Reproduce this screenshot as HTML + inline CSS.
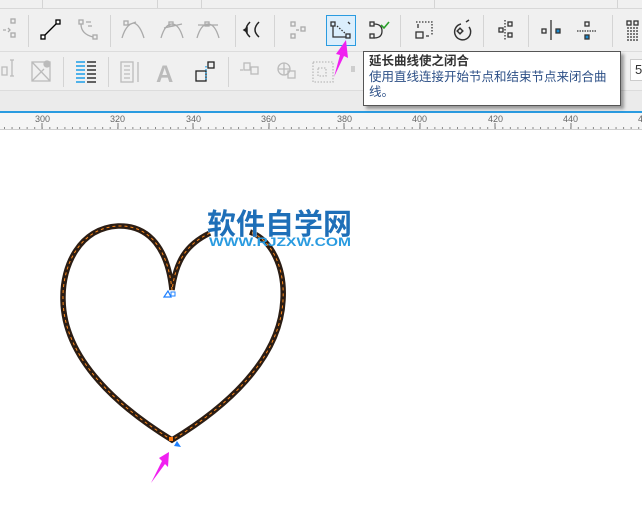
<!DOCTYPE html>
<html><head><meta charset="utf-8"><style>
body{margin:0;width:642px;height:507px;overflow:hidden;background:#fff;font-family:"Liberation Sans","Noto Sans CJK SC",sans-serif;position:relative}
.a{position:absolute}
.sep{position:absolute;width:1px;background:#d4d4d4}
</style></head><body>
<div class="a" style="left:0;top:0;width:642px;height:112px;background:#f0f0f0"></div>
<div class="a" style="left:0;top:8px;width:642px;height:1px;background:#d8d8d8"></div>
<div class="sep" style="left:42px;top:0;height:8px"></div>
<div class="sep" style="left:157px;top:0;height:8px"></div>
<div class="sep" style="left:201px;top:0;height:8px"></div>
<div class="sep" style="left:434px;top:0;height:8px"></div>
<div class="sep" style="left:617px;top:0;height:8px"></div>
<div class="a" style="left:0;top:51px;width:642px;height:1px;background:#dcdcdc"></div>
<div class="a" style="left:0;top:90px;width:642px;height:1px;background:#dcdcdc"></div>
<div class="a" style="left:0;top:91px;width:642px;height:21px;background:#ebebeb"></div>
<div class="a" style="left:0;top:111px;width:642px;height:2px;background:#2a9be0"></div>
<div class="a" style="left:0;top:113px;width:642px;height:17px;background:#f5f5f5"></div>
<div class="a" style="left:0;top:129px;width:642px;height:1px;background:#cfcfcf"></div>
<div class="sep" style="left:28px;top:15px;height:32px"></div>
<div class="sep" style="left:110px;top:15px;height:32px"></div>
<div class="sep" style="left:235px;top:15px;height:32px"></div>
<div class="sep" style="left:274px;top:15px;height:32px"></div>
<div class="sep" style="left:400px;top:15px;height:32px"></div>
<div class="sep" style="left:483px;top:15px;height:32px"></div>
<div class="sep" style="left:528px;top:15px;height:32px"></div>
<div class="sep" style="left:612px;top:15px;height:32px"></div>
<div class="sep" style="left:63px;top:57px;height:30px"></div>
<div class="sep" style="left:108px;top:57px;height:30px"></div>
<div class="sep" style="left:228px;top:57px;height:30px"></div>
<div class="a" style="left:326px;top:15px;width:30px;height:31px;border:1px solid #2a9be0;background:#dbeefc;box-sizing:border-box"></div>
<svg class="a" style="left:0;top:0" width="642" height="130">
<g fill="none" stroke-width="1.3">
<g stroke="#aaa"><rect x="11" y="19" width="4" height="4"/><rect x="11" y="33" width="4" height="4"/><path d="M3 30h3M8 28l2 2-2 2"/></g>
<g stroke="#000"><path d="M43 37L58 22"/><rect x="41" y="35" width="4" height="4" fill="#fff"/><rect x="56" y="20" width="4" height="4" fill="#fff"/></g>
<g stroke="#aaa"><rect x="79" y="20" width="4" height="4"/><path d="M81 24q0 10 12 13M86 22h5M88 26h4"/><rect x="93" y="35" width="4" height="4"/></g>
<g stroke="#aaa"><rect x="124" y="21" width="4" height="4"/><path d="M122 38q4-14 12-15q6 2 10 15M128 25l8-3"/></g>
<g stroke="#aaa"><path d="M161 38q4-14 11-14q7 0 11 14M164 28l18-4"/><rect x="169" y="22" width="4" height="4"/></g>
<g stroke="#aaa"><path d="M197 38q4-14 11-14q7 0 11 14M198 25h20"/><rect x="205" y="22" width="4" height="4"/></g>
<g stroke="#222" stroke-width="1.5"><path d="M250 22q-8 8 0 15M259 22q-8 8 0 15"/><path d="M244 30l3-2v4z" fill="#222"/></g>
<g stroke="#aaa"><rect x="291" y="22" width="4" height="4"/><rect x="291" y="34" width="4" height="4"/><rect x="301" y="27" width="4" height="4"/><path d="M296 30h3"/></g>
<g stroke="#333"><rect x="331" y="22" width="4" height="4"/><path d="M333 26v11h13" /><rect x="346" y="34" width="4" height="4"/><path d="M337 26l9 8" stroke-dasharray="1.5 1.5"/><path d="M348 22l2 2"/></g>
<g stroke="#333"><rect x="370" y="22" width="4" height="4"/><rect x="370" y="34" width="4" height="4"/><path d="M374 24q8 0 8 7q0 7-8 7"/><path d="M381 25l3 3 5-6" stroke="#2aa02a" stroke-width="1.6"/></g>
<g stroke="#333"><path d="M416 22h16v14" stroke-dasharray="1.5 1.5"/><rect x="416" y="32" width="7" height="6"/><path d="M418 24v4M426 36h3"/></g>
<g stroke="#333" stroke-width="1.5"><path d="M461 24a8 8 0 1 0 8 3"/><rect x="458" y="29" width="4" height="4" transform="rotate(45 460 31)"/><path d="M466 22l3-2"/></g>
<g stroke="#333"><rect x="499" y="28" width="4" height="4"/><rect x="508" y="22" width="4" height="4"/><rect x="508" y="33" width="4" height="4"/><path d="M505 20v20" stroke-dasharray="1.5 1.5"/></g>
<g stroke="#333"><rect x="542" y="29" width="4" height="4"/><rect x="556" y="29" width="4" height="4" fill="#1a8ad0"/><path d="M551 20v20"/></g>
<g stroke="#333"><rect x="585" y="22" width="4" height="4"/><rect x="585" y="35" width="4" height="4" fill="#1a8ad0"/><path d="M577 31h20" stroke-dasharray="1.5 1"/></g>
<g stroke="#333"><rect x="627" y="21" width="4" height="4"/><rect x="634" y="21" width="4" height="4"/><path d="M627 28h11M627 31h11M627 34h11M627 37h11M627 40h11" stroke-dasharray="2 1"/></g>
<g stroke="#bbb"><path d="M12 60v16M10 60h4M10 76h4M2 67h5v8h-5z"/></g>
<g stroke="#bbb"><rect x="32" y="62" width="18" height="19"/><path d="M32 62l18 19M32 81l12-12"/><circle cx="47" cy="64" r="3" fill="#bbb"/></g>
<g stroke-width="1.6"><path d="M76 62h9M76 66h9M76 70h9M76 74h9M76 78h9M76 82h9" stroke="#1a9ee8"/><path d="M87 62h9M87 66h9M87 70h9M87 74h9M87 78h9M87 82h9" stroke="#333"/></g>
<g stroke="#bbb"><rect x="121" y="62" width="12" height="20"/><path d="M124 66h6M124 70h6M124 74h6M124 78h6M138 62v20"/></g>
<text x="156" y="82" font-size="24" font-weight="bold" fill="#bbb" font-family="Liberation Sans">A</text>
<g stroke="#222"><rect x="196" y="71" width="10" height="10"/><rect x="208" y="62" width="6" height="6"/></g><path d="M206 66v15" stroke="#1a9ee8" stroke-dasharray="1.5 1.5"/>
<g stroke="#bbb"><rect x="244" y="63" width="6" height="7"/><rect x="251" y="67" width="7" height="7"/><path d="M240 70h3"/></g>
<g stroke="#bbb"><circle cx="284" cy="69" r="6"/><path d="M278 69h12M284 63v12"/><rect x="288" y="71" width="7" height="7"/></g>
<g stroke="#bbb" stroke-dasharray="1.5 1.5"><rect x="313" y="62" width="20" height="20"/><rect x="318" y="68" width="8" height="8"/></g>
<path d="M352 66v6M354 66v6" stroke="#bbb"/>
</g>
<g font-size="9" fill="#666" font-family="Liberation Sans">
<text x="35" y="122">300</text><text x="110" y="122">320</text><text x="186" y="122">340</text><text x="261" y="122">360</text><text x="337" y="122">380</text><text x="412" y="122">400</text><text x="488" y="122">420</text><text x="563" y="122">440</text><text x="638" y="122">4</text>
</g>
<g stroke="#777" stroke-width="1">
<path d="M42 123v6M118 123v6M193 123v6M269 123v6M344 123v6M420 123v6M495 123v6M571 123v6"/>
</g>
<path d="M4 128h638" stroke="#888" stroke-width="2" stroke-dasharray="1 6.55"/>
<path d="M346 40l-10 14 4 1-6 22 10-21 4 2z" fill="#f020f0"/>
</svg>
<div class="a" style="left:630px;top:59px;width:20px;height:22px;border:1px solid #ccc;background:#fff;font-size:13px;color:#333;box-sizing:border-box;padding:2px 0 0 4px">5</div>
<div class="a" style="left:363px;top:51px;width:258px;height:55px;background:#fff;border:1px solid #555;box-shadow:3px 3px 3px rgba(0,0,0,.35);box-sizing:border-box;padding:2px 0 0 5px;font-size:12.5px;line-height:15.5px;color:#333">
<b>延长曲线使之闭合</b><br><span style="color:#2c4f86">使用直线连接开始节点和结束节点来闭合曲线。</span></div>
<svg class="a" style="left:0;top:0" width="642" height="507">
<path d="M172,290 C168,250 150,225 118,226 C80,228 62,265 63,300 C64,360 120,408 172,440 C225,408 280,360 283,300 C285,268 272,240 250,232 M210,233 C185,245 176,262 172,290" fill="none" stroke="#2b1d14" stroke-width="5.5"/>
<path d="M172,290 C168,250 150,225 118,226 C80,228 62,265 63,300 C64,360 120,408 172,440 C225,408 280,360 283,300 C285,268 272,240 250,232 M210,233 C185,245 176,262 172,290" fill="none" stroke="#ff8a1c" stroke-width="1" stroke-dasharray="3 3"/>
<path d="M164 297l4-6 3 6z" fill="none" stroke="#1e80ff" stroke-width="1.2"/><rect x="171" y="292" width="4" height="4" fill="none" stroke="#1e80ff"/>
<rect x="169" y="437" width="4" height="4" fill="#ff7a10"/><path d="M174 446l7 1-4-6z" fill="#1e80ff"/>
<path d="M169 452l-10 6 3 3-11 22 14-19 3 3z" fill="#f020f0"/>
<text x="207" y="234" font-size="29" font-weight="bold" fill="#1e6fb8" font-family="Liberation Sans,Noto Sans CJK SC,sans-serif" stroke="#fff" stroke-width="0.5" paint-order="stroke" textLength="145" lengthAdjust="spacingAndGlyphs">软件自学网</text>
<text x="209" y="246" font-size="12" font-weight="bold" fill="#2a9be0" font-family="Liberation Sans,sans-serif" textLength="142" lengthAdjust="spacingAndGlyphs">WWW.RJZXW.COM</text>
</svg>
</body></html>
